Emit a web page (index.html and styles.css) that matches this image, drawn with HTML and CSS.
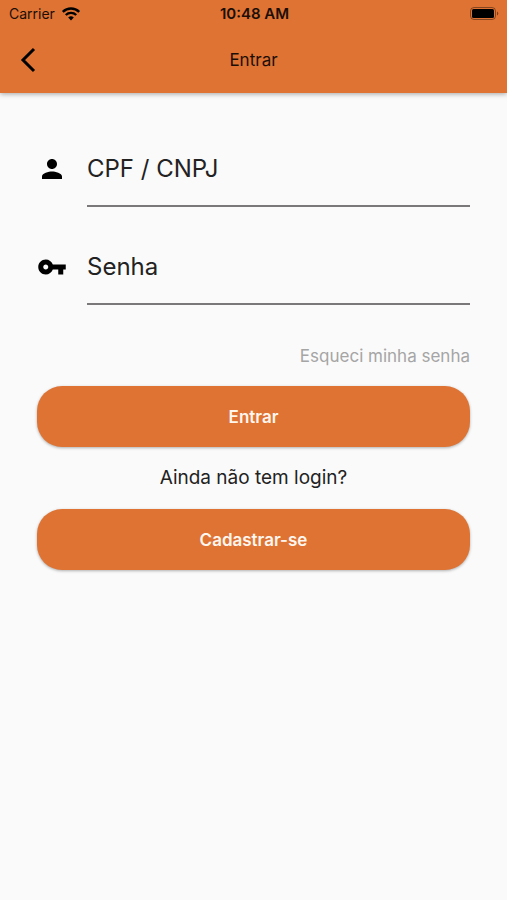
FILE: index.html
```
<!DOCTYPE html>
<html lang="pt-BR">
<head>
    <meta charset="UTF-8">
    <meta name="viewport" content="width=device-width, initial-scale=1.0">
    <title>Entrar</title>
    <link rel="stylesheet" href="styles.css">
</head>
<body>
    <header class="topo">
        <!-- Barra de status -->
        <div class="status">
            <div class="operadora">
                <span>Carrier</span>
                <svg width="20" height="16" viewBox="0 0 20 16" fill="none" stroke="#000" stroke-width="2.4" aria-hidden="true">
                    <path d="M1.8 5.8a11.8 11.8 0 0 1 16.4 0"/>
                    <path d="M4.8 9a7.4 7.4 0 0 1 10.4 0"/>
                    <path d="M10 14.4l-2.8-2.8a4.1 4.1 0 0 1 5.6 0z" fill="#000" stroke="none"/>
                </svg>
            </div>
            <span class="hora">10:48 AM</span>
            <svg class="bateria" width="30" height="14" viewBox="0 0 30 14" aria-hidden="true">
                <rect x="0.5" y="0.5" width="25" height="12" rx="3.5" fill="none" stroke="#000" stroke-opacity="0.4"/>
                <rect x="2" y="2" width="22" height="9" rx="1.5"/>
                <path d="M27 4.5v4a2.2 2.2 0 0 0 0-4z" fill-opacity="0.45"/>
            </svg>
        </div>

        <!-- Barra de navegação -->
        <nav class="barra">
            <button class="voltar" type="button" aria-label="Voltar">
                <svg width="16" height="26" viewBox="0 0 16 26" fill="none" stroke="#000" stroke-width="3">
                    <path d="M14 2L3 13l11 11"/>
                </svg>
            </button>
            <h1>Entrar</h1>
        </nav>
    </header>

    <main>
        <form class="login">
            <div class="campo">
                <label for="documento" aria-label="CPF / CNPJ">
                    <svg width="30" height="30" viewBox="0 0 24 24">
                        <path d="M12 12c2.21 0 4-1.79 4-4s-1.79-4-4-4-4 1.79-4 4 1.79 4 4 4zm0 2c-2.67 0-8 1.34-8 4v2h16v-2c0-2.66-5.33-4-8-4z"/>
                    </svg>
                </label>
                <input type="text" id="documento" placeholder="CPF / CNPJ">
            </div>
            <div class="campo">
                <label for="senha" aria-label="Senha">
                    <svg width="30" height="30" viewBox="0 0 24 24">
                        <path d="M12.65 10C11.83 7.67 9.61 6 7 6c-3.31 0-6 2.69-6 6s2.69 6 6 6c2.61 0 4.83-1.67 5.65-4H17v4h4v-4h2v-4H12.65zM7 14c-1.1 0-2-.9-2-2s.9-2 2-2 2 .9 2 2-.9 2-2 2z"/>
                    </svg>
                </label>
                <input type="password" id="senha" placeholder="Senha">
            </div>

            <a class="esqueci" href="#">Esqueci minha senha</a>
            <button class="botao" type="submit">Entrar</button>
            <p>Ainda não tem login?</p>
            <button class="botao" type="button">Cadastrar-se</button>
        </form>
    </main>
</body>
</html>
```
FILE: styles.css
```
* {
    box-sizing: border-box;
}
body {
    font-family: Inter, "Liberation Sans", sans-serif;
    margin: 0;
    min-height: 100vh;
    background-color: #fafafa;
    color: #222;
}
.topo {
    background-color: #de7334;
    color: #1c0e06;
    box-shadow: 0 1px 5px rgba(0, 0, 0, 0.35);
}
.status {
    display: grid;
    grid-template-columns: 1fr auto 1fr;
    align-items: center;
    height: 27px;
    padding: 0 7px 0 9px;
    font-size: 14px;
}
.operadora {
    display: flex;
    align-items: center;
    gap: 6px;
}
.hora {
    font-size: 15px;
    font-weight: 600;
}
.bateria {
    justify-self: end;
}
.barra {
    display: grid;
    grid-template-columns: 56px 1fr 56px;
    align-items: center;
    height: 66px;
}
.voltar {
    display: flex;
    padding: 8px 20px;
    background: none;
    border: none;
    cursor: pointer;
}
.voltar svg {
    flex-shrink: 0;
}
.barra h1 {
    margin: 0;
    font-size: 17px;
    font-weight: 400;
    text-align: center;
}
.login {
    display: flex;
    flex-direction: column;
    padding: 37px;
}
.campo {
    display: flex;
    align-items: center;
    gap: 20px;
    height: 77px;
    margin-bottom: 21px;
}
.campo label {
    display: flex;
}
.campo input {
    flex: 1;
    min-width: 0;
    height: 77px;
    padding: 2px 0 0;
    font-family: inherit;
    font-size: 24px;
    color: #222;
    background: none;
    border: none;
    border-bottom: 2px solid #7a7878;
    border-radius: 0;
    outline: none;
}
.campo input::placeholder {
    color: #222;
    opacity: 1;
}
.esqueci {
    align-self: flex-end;
    margin: 20px 0;
    font-size: 17px;
    line-height: 20px;
    color: #a5a5a5;
    text-decoration: none;
}
.botao {
    height: 61px;
    font-family: inherit;
    font-size: 17px;
    font-weight: 600;
    color: #fff6ee;
    background-color: #de7334;
    border: none;
    border-radius: 25px;
    box-shadow: 0 1px 3px rgba(0, 0, 0, 0.3);
    cursor: pointer;
}
.login p {
    margin: 20px 0;
    font-size: 19px;
    line-height: 22px;
    text-align: center;
}
```
